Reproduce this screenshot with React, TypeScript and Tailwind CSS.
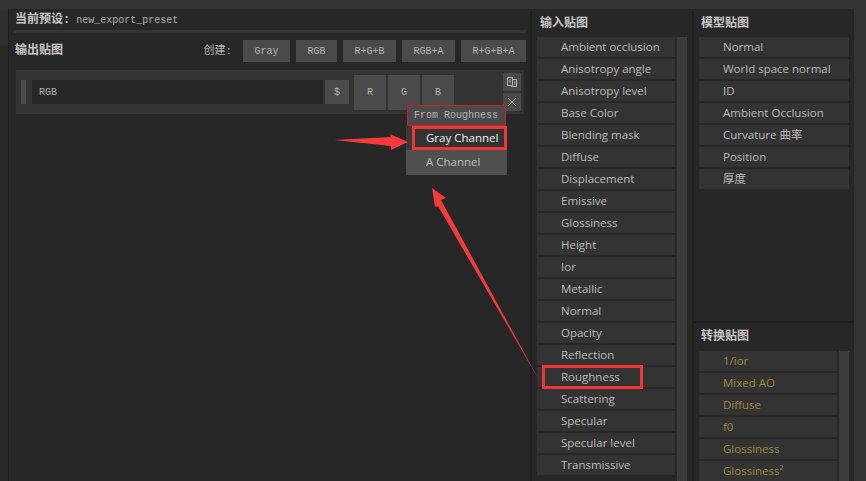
const inputMaps = [
  'Ambient occlusion', 'Anisotropy angle', 'Anisotropy level', 'Base Color', 'Blending mask', 'Diffuse',
  'Displacement', 'Emissive', 'Glossiness', 'Height', 'Ior', 'Metallic', 'Normal', 'Opacity', 'Reflection',
  'Roughness', 'Scattering', 'Specular', 'Specular level', 'Transmissive',
];
const modelMaps = ['Normal', 'World space normal', 'ID', 'Ambient Occlusion', 'Curvature 曲率', 'Position', '厚度'];
const convertMaps = ['1/ior', 'Mixed AO', 'Diffuse', 'f0', 'Glossiness', 'Glossiness²'];
const createButtons = [
  { label: 'Gray', width: 'w-[47px]' },
  { label: 'RGB', width: 'w-[41px]' },
  { label: 'R+G+B', width: 'w-[53px]' },
  { label: 'RGB+A', width: 'w-[53px]' },
  { label: 'R+G+B+A', width: 'w-[65px]' },
];

const mono = "font-['Liberation_Mono','Noto_Sans_CJK_SC',monospace]";
const sans = "font-['Open_Sans','Noto_Sans_CJK_SC',sans-serif]";

function MapRow({ label, amber }: { label: string; amber?: boolean }) {
  return (
    <div
      className={`h-5 shrink-0 bg-[#333333] pl-6 text-[11.5px] leading-5 whitespace-nowrap ${sans} ${
        amber ? 'text-[#a08a3c]' : 'text-[#bdbdbd]'
      }`}
    >
      {label}
    </div>
  );
}

function Heading({ children }: { children: string }) {
  return (
    <div className={`text-[12px] font-bold leading-4 text-[#c8c8c8] ${mono}`}>{children}</div>
  );
}

function ChannelButton({ label }: { label: string }) {
  return (
    <div className={`flex h-[35px] w-8 items-center justify-center bg-[#4a4a4a] text-[10px] text-[#b4b4b4] ${mono}`}>
      {label}
    </div>
  );
}

export default function App() {
  return (
    <div className="relative h-[481px] w-[866px] overflow-hidden bg-[#333333] pt-[9px]">
      <div className="flex h-[472px]">
        {/* left edge strip */}
        <div className="w-2 bg-[#292929]">
          <div className="h-9 bg-[#303030]" />
        </div>

        {/* export column */}
        <div className="w-[522px] border-l border-[#1e1e1e] bg-[#272727] pl-[5px] pr-[4px] pt-[2px]">
          <div className="ml-[1px] flex h-[18px] items-center gap-[6px]">
            <span className={`text-[12px] font-bold text-[#c8c8c8] ${mono}`}>当前预设:</span>
            <span className={`text-[10px] text-[#b4b4b4] ${mono}`}>new_export_preset</span>
          </div>
          <div className="mt-[1px] h-[3px] bg-[#333333]" />
          <div className="mt-[7px] flex h-[22px] items-center pl-[1px]">
            <Heading>输出贴图</Heading>
            <span className={`ml-auto mr-[11px] text-[11px] text-[#b4b4b4] ${mono}`}>创建:</span>
            <div className="flex gap-[6px]">
              {createButtons.map((b) => (
                <div
                  key={b.label}
                  className={`flex h-[22px] items-center justify-center bg-[#4a4a4a] text-[10px] text-[#b4b4b4] ${b.width} ${mono}`}
                >
                  {b.label}
                </div>
              ))}
            </div>
          </div>
          <div className="ml-[2px] mt-2 flex h-[44px] w-[508px] items-center bg-[#333333] pl-[5px] pr-[3px]">
            <div className="h-6 w-[5px] bg-[#4a4a4a]" />
            <div className={`ml-[6px] flex h-6 w-[291px] items-center bg-[#272727] pl-[7px] text-[10px] text-[#b4b4b4] ${mono}`}>
              RGB
            </div>
            <div className={`ml-[2px] flex h-6 w-6 items-center justify-center bg-[#4a4a4a] text-[10px] text-[#b4b4b4] ${mono}`}>
              $
            </div>
            <div className="ml-[5px] flex gap-[2px]">
              <ChannelButton label="R" />
              <ChannelButton label="G" />
              <ChannelButton label="B" />
            </div>
            <div className="ml-auto flex flex-col gap-[2px]">
              <div className="flex h-[18px] w-[18px] items-center justify-center bg-[#4a4a4a]">
                <svg width="12" height="12" viewBox="0 0 12 12" fill="none" stroke="#b4b4b4" strokeWidth="1">
                  <path d="M1.5 1.5h5v8h-5z" />
                  <path d="M6.5 3.5h4v7h-5v-1" />
                  <path d="M3 4h2M3 6h2M8 6h1.5M8 8h1.5" />
                </svg>
              </div>
              <div className="flex h-[18px] w-[18px] items-center justify-center bg-[#4a4a4a]">
                <svg width="10" height="10" viewBox="0 0 10 10" stroke="#b4b4b4" strokeWidth="1">
                  <path d="M1 1l8 8M9 1l-8 8" />
                </svg>
              </div>
            </div>
          </div>
        </div>

        {/* input maps */}
        <div className="w-[162px] overflow-hidden border-l-2 border-[#1e1e1e] bg-[#272727] pl-[5px]">
          <div className="flex h-7 items-center pl-[3px] pt-[2px]">
            <Heading>输入贴图</Heading>
          </div>
          <div className="flex gap-[2px]">
            <div className="flex w-[138px] flex-col gap-[2px]">
              {inputMaps.map((m) => (
                <MapRow key={m} label={m} />
              ))}
            </div>
            <div className="h-[444px] w-[10px] bg-[#3c3c3c]" />
          </div>
        </div>

        {/* model and converted maps */}
        <div className="flex w-[162px] flex-col border-l-2 border-[#1e1e1e]">
          <div className="h-[314px] border-b-2 border-[#1e1e1e] bg-[#272727] pl-[5px] pr-[5px]">
            <div className="flex h-7 items-center pl-[2px] pt-[2px]">
              <Heading>模型贴图</Heading>
            </div>
            <div className="flex flex-col gap-[2px]">
              {modelMaps.map((m) => (
                <MapRow key={m} label={m} />
              ))}
            </div>
          </div>
          <div className="flex-1 overflow-hidden bg-[#272727] pl-[5px] pr-[5px]">
            <div className="flex h-7 items-center pl-[2px] pt-[0px]">
              <Heading>转换贴图</Heading>
            </div>
            <div className="flex gap-[2px]">
              <div className="flex w-[138px] flex-col gap-[2px]">
                {convertMaps.map((m) => (
                  <MapRow key={m} label={m} amber />
                ))}
              </div>
              <div className="h-[130px] w-[10px] bg-[#3c3c3c]" />
            </div>
          </div>
        </div>
      </div>

      {/* channel dropdown */}
      <div className={`absolute left-[406px] top-[105px] w-[101px] text-[11.5px] ${sans}`}>
        <div className={`mx-[1px] h-[21px] border border-[#d02020] bg-[#4a4a4a] pl-[6px] text-[10px] leading-[19px] text-[#b4b4b4] ${mono}`}>
          From Roughness
        </div>
        <div className="flex h-6 bg-[#3a3a3a] pl-[6px]">
          <div className="h-6 w-[95px] border-[3px] border-[#f03535] bg-[#333333] pl-[11px] leading-[17px] text-[#f0f0f0]">
            Gray Channel
          </div>
        </div>
        <div className="h-[25px] bg-[#505050] pl-5 leading-6 text-[#bdbdbd]">A Channel</div>
      </div>

      {/* roughness highlight */}
      <div className="absolute left-[542px] top-[365px] h-6 w-[101px] border-[3px] border-[#f03535]" />

      {/* arrows */}
      <svg className="absolute left-0 top-0 pointer-events-none" width="866" height="481" fill="#f53a3a">
        <polygon points="334,140 391,137 390,134 408,142 391,150 391,146" />
        <polygon points="432,188 446,198 441,200 539,380 438,206 435,207" />
      </svg>
    </div>
  );
}
